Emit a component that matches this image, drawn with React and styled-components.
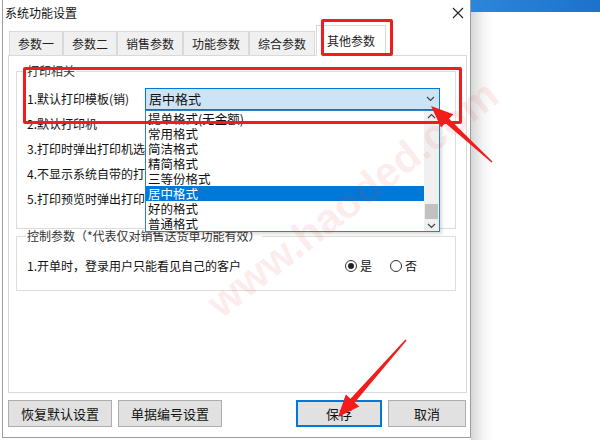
import React from "react";
import styled, { createGlobalStyle } from "styled-components";

const GlobalStyle = createGlobalStyle`
  body {
    margin: 0;
    background: #fff;
    font-family: "Noto Sans CJK SC", "Liberation Sans", sans-serif;
    font-size: 12px;
    color: #111;
  }
`;

const Screen = styled.div`
  position: relative;
  display: flex;
  width: 600px;
  height: 440px;
  overflow: hidden;
`;

const Dialog = styled.div`
  display: flex;
  flex-direction: column;
  width: 467px;
  height: 437px;
  margin-left: 2px;
  background: #fff;
  border-left: 1px solid #9c9c9c;
  border-right: 1px solid #9c9c9c;
  border-bottom: 1px solid #9c9c9c;
`;

const TitleBar = styled.div`
  display: flex;
  align-items: center;
  justify-content: space-between;
  height: 26px;
  padding: 0 6px 0 2px;
  line-height: 16px;
`;

const TabStrip = styled.div`
  display: flex;
  align-items: flex-end;
  height: 30px;
  padding-left: 6px;
`;

const Tab = styled.div`
  display: flex;
  align-items: center;
  justify-content: center;
  height: ${(p) => (p.active ? "29px" : "23px")};
  padding: 0 ${(p) => (p.active ? "10px" : "8px")};
  margin-left: ${(p) => (p.active ? "1px" : "0")};
  background: ${(p) => (p.active ? "#fff" : "#f0f0f0")};
  border: 1px solid #d9d9d9;
  border-bottom: ${(p) => (p.active ? "1px solid #fff" : "1px solid #d9d9d9")};
  position: relative;
  z-index: ${(p) => (p.active ? 1 : 0)};
  font-size: 12px;
  line-height: 16px;
  color: #222;
`;

const Panel = styled.div`
  height: 338px;
  margin: -1px 3px 0 5px;
  border: 1px solid #d9d9d9;
  padding-top: 8px;
  box-sizing: border-box;
`;

const Group = styled.fieldset`
  margin: 0 10px 0 7px;
  padding: ${(p) => p.pad};
  border: 1px solid #dcdcdc;
  min-width: 0;
  position: relative;
`;

const Legend = styled.legend`
  margin-left: 9px;
  padding: 0 1px;
  line-height: 14px;
  color: #333;
`;

const Row = styled.div`
  display: flex;
  align-items: center;
  height: 25px;
  padding-left: 10px;
`;

const Label = styled.span`
  width: ${(p) => p.width || "auto"};
  flex: ${(p) => (p.grow ? 1 : "none")};
  overflow: ${(p) => (p.clip ? "hidden" : "visible")};
  white-space: nowrap;
  line-height: 18px;
`;

const Combo = styled.div`
  position: relative;
  display: flex;
  align-items: center;
  justify-content: space-between;
  width: 295px;
  height: 22px;
  box-sizing: border-box;
  padding: 0 4px 0 3px;
  background: #cce4f7;
  border: 1px solid #0078d7;
  font-size: 13px;
`;

const DropList = styled.div`
  position: absolute;
  top: 21px;
  left: -1px;
  z-index: 5;
  display: flex;
  width: 295px;
  height: 122px;
  box-sizing: border-box;
  background: #fff;
  border: 1px solid #2f7fc9;
  box-shadow: 2px 2px 3px rgba(0, 0, 0, 0.15);
`;

const Items = styled.div`
  flex: 1;
  display: flex;
  flex-direction: column;
`;

const Item = styled.div`
  height: 15px;
  line-height: 15px;
  padding-left: 2px;
  font-size: 12.5px;
  background: ${(p) => (p.selected ? "#0078d7" : "transparent")};
  color: ${(p) => (p.selected ? "#fff" : "#111")};
`;

const ScrollBar = styled.div`
  width: 15px;
  display: flex;
  flex-direction: column;
  align-items: center;
  justify-content: space-between;
  background: #f0f0f0;
  padding: 2px 0;
`;

const Thumb = styled.div`
  width: 13px;
  height: 15px;
  margin-top: auto;
  margin-bottom: 4px;
  background: #c1c1c1;
`;

const RadioGroup = styled.div`
  display: flex;
  gap: 18px;
  margin-right: 38px;
`;

const RadioItem = styled.label`
  display: flex;
  align-items: center;
  gap: 3px;
  line-height: 16px;
`;

const RadioDot = styled.span`
  width: 10px;
  height: 10px;
  border-radius: 50%;
  border: 1px solid #333;
  display: flex;
  align-items: center;
  justify-content: center;
  &::after {
    content: "";
    width: 6px;
    height: 6px;
    border-radius: 50%;
    background: ${(p) => (p.checked ? "#222" : "transparent")};
  }
`;

const Footer = styled.div`
  display: flex;
  align-items: center;
  gap: 6px;
  height: 41px;
  padding: 0 3px 0 5px;
`;

const Button = styled.div`
  display: flex;
  align-items: center;
  justify-content: center;
  width: ${(p) => p.w}px;
  height: 27px;
  box-sizing: border-box;
  margin-left: ${(p) => p.push || "0"};
  background: #e1e1e1;
  border: ${(p) => (p.primary ? "2px solid #0078d7" : "1px solid #adadad")};
  font-size: 13px;
  color: #111;
`;

const Side = styled.div`
  flex: 1;
  display: flex;
  flex-direction: column;
`;

const SideBar = styled.div`
  height: 12px;
  background: linear-gradient(90deg, #2d86da, #1c72cc);
`;

const SideBody = styled.div`
  flex: 1;
  background: linear-gradient(90deg, #d6d6d6 0, #f4f4f4 12px, #fff 22px);
`;

const Mark = styled.div`
  position: absolute;
  border: 3px solid #f21c1c;
  border-radius: 2px;
  pointer-events: none;
  z-index: 8;
`;

const Watermark = styled.div`
  position: absolute;
  left: 175px;
  top: 175px;
  transform: rotate(-38deg);
  font-family: "Liberation Sans", sans-serif;
  font-size: 42px;
  font-weight: bold;
  color: rgba(240, 60, 60, 0.1);
  white-space: nowrap;
  z-index: 9;
  pointer-events: none;
`;

const Overlay = styled.svg`
  position: absolute;
  left: 0;
  top: 0;
  z-index: 10;
  pointer-events: none;
`;

const tabs = ["参数一", "参数二", "销售参数", "功能参数", "综合参数", "其他参数"];
const options = [
  "提单格式(无金额)",
  "常用格式",
  "简洁格式",
  "精简格式",
  "三等份格式",
  "居中格式",
  "好的格式",
  "普通格式",
];
// rows under the open list: only the part left of the list shows
const printRows = [
  "2.默认打印机",
  "3.打印时弹出打印机选",
  "4.不显示系统自带的打",
  "5.打印预览时弹出打印",
];

// tapered arrow: thin tail, triangular head
function arrowPoints(tx, ty, hx, hy) {
  const dx = hx - tx;
  const dy = hy - ty;
  const len = Math.hypot(dx, dy);
  const ux = dx / len;
  const uy = dy / len;
  const nx = -uy;
  const ny = ux;
  const headLen = 22;
  const headW = 9;
  const bx = hx - ux * headLen;
  const by = hy - uy * headLen;
  const pts = [
    [tx + nx * 0.8, ty + ny * 0.8],
    [bx + nx * 2.8, by + ny * 2.8],
    [bx + nx * headW, by + ny * headW],
    [hx, hy],
    [bx - nx * headW, by - ny * headW],
    [bx - nx * 2.8, by - ny * 2.8],
    [tx - nx * 0.8, ty - ny * 0.8],
  ];
  return pts.map((p) => p.map((v) => v.toFixed(1)).join(",")).join(" ");
}

const Chevron = ({ up }) => (
  <svg width="9" height="6" viewBox="0 0 9 6">
    <path
      d={up ? "M1 5 L4.5 1.5 L8 5" : "M1 1 L4.5 4.5 L8 1"}
      fill="none"
      stroke="#444"
      strokeWidth="1.2"
    />
  </svg>
);

export default function App() {
  return (
    <>
      <GlobalStyle />
      <Screen>
        <Dialog>
          <TitleBar>
            <span>系统功能设置</span>
            <svg width="12" height="12" viewBox="0 0 12 12">
              <path d="M1 1 L11 11 M11 1 L1 11" stroke="#222" strokeWidth="1.1" />
            </svg>
          </TitleBar>
          <TabStrip>
            {tabs.map((t, i) => (
              <Tab key={t} active={i === tabs.length - 1}>
                {t}
              </Tab>
            ))}
          </TabStrip>
          <Panel>
            <Group pad="8px 0 17px 0">
              <Legend>打印相关</Legend>
              <Row>
                <Label width="118px">1.默认打印模板(销)</Label>
                <Combo>
                  <span>居中格式</span>
                  <Chevron />
                  <DropList>
                    <Items>
                      {options.map((o) => (
                        <Item key={o} selected={o === "居中格式"}>
                          {o}
                        </Item>
                      ))}
                    </Items>
                    <ScrollBar>
                      <Chevron up />
                      <Thumb />
                      <Chevron />
                    </ScrollBar>
                  </DropList>
                </Combo>
              </Row>
              {printRows.map((r) => (
                <Row key={r}>
                  <Label width="118px">{r}</Label>
                </Row>
              ))}
            </Group>
            <Group pad="10px 0 12px 0">
              <Legend>控制参数（*代表仅对销售送货单功能有效）</Legend>
              <Row>
                <Label grow>1.开单时，登录用户只能看见自己的客户</Label>
                <RadioGroup>
                  <RadioItem>
                    <RadioDot checked />是
                  </RadioItem>
                  <RadioItem>
                    <RadioDot />否
                  </RadioItem>
                </RadioGroup>
              </Row>
            </Group>
          </Panel>
          <Footer>
            <Button w={104}>恢复默认设置</Button>
            <Button w={104}>单据编号设置</Button>
            <Button w={86} primary push="68px">
              保存
            </Button>
            <Button w={78}>取消</Button>
          </Footer>
        </Dialog>
        <Side>
          <SideBar />
          <SideBody />
        </Side>

        <Mark style={{ left: 321, top: 19, width: 66, height: 31 }} />
        <Mark style={{ left: 23, top: 67, width: 433, height: 51 }} />
        <Watermark>www.haoded.com</Watermark>
        <Overlay width="600" height="440">
          <polygon points={arrowPoints(492, 162, 431, 106)} fill="#f21c1c" />
          <polygon points={arrowPoints(406, 340, 338, 417)} fill="#f21c1c" />
        </Overlay>
      </Screen>
    </>
  );
}
